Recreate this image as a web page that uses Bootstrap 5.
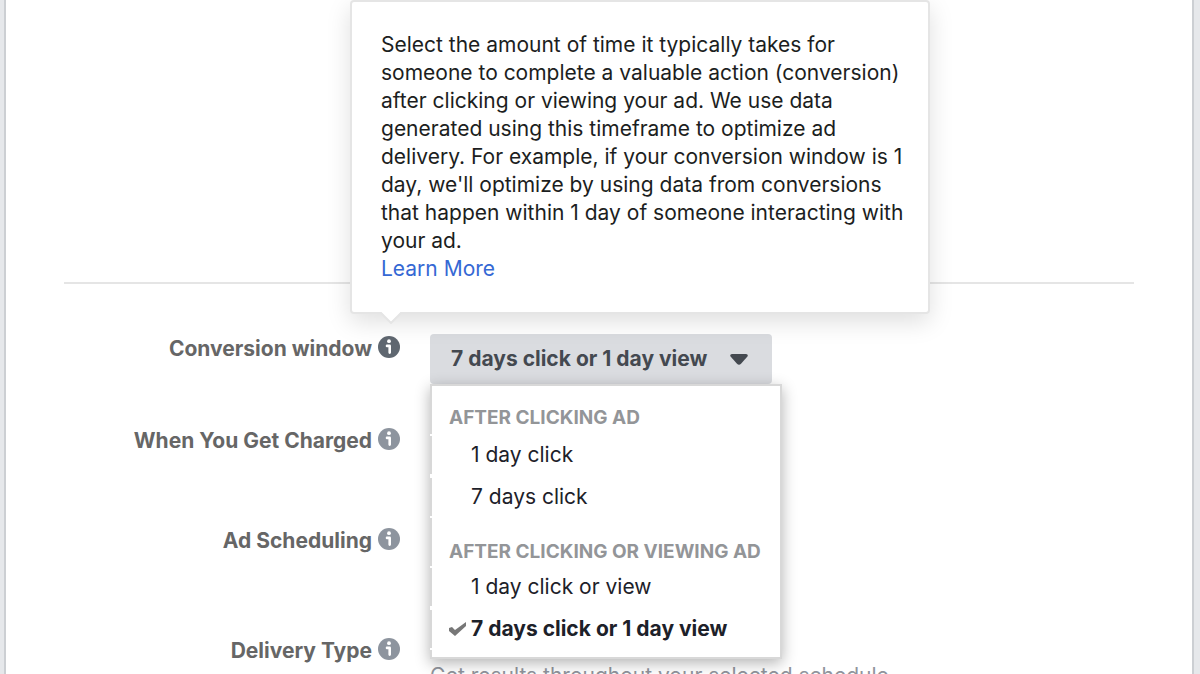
<!DOCTYPE html>
<html lang="en">
<head>
<meta charset="utf-8">
<meta name="viewport" content="width=device-width, initial-scale=1">
<title>Ad set: optimization and delivery</title>
<link href="https://cdn.jsdelivr.net/npm/bootstrap@5.3.0/dist/css/bootstrap.min.css" rel="stylesheet">
<style>
  body { font-family: Inter, "Liberation Sans", sans-serif; font-size: 21px; line-height: 28px; color: #1d2129; background: #e6e8eb; }
  .panel { margin: 0 6px 0 4px; padding: 0 58px; border: solid #cccfd3; border-width: 0 2px; }
  .budget-area { height: 282px; border-bottom: 2px solid #e5e5e5; box-sizing: content-box; }
  .field-label { flex: 0 0 336px; padding-top: 43px; gap: 6px; color: #666; font-weight: 700; }
  .row-window .field-label { padding-top: 51px; }
  .info-btn { width: 22px; height: 22px; margin-top: 1px; color: #8d949e; line-height: 0; }
  .info-btn.active { color: #5f6770; }
  .field-row { column-gap: 30px; }
  .row-charged { min-height: 100px; }
  .row-schedule { min-height: 110px; }
  .tip { left: -28px; bottom: 44px; width: 580px; padding: 29px 18px 29px 29px; border: 2px solid #e5e5e5; border-radius: 4px; color: #1d2129; font-weight: 400; box-shadow: 0 8px 24px rgba(0,0,0,.13); z-index: 20; }
  .tip p { font-size: 21px; color: #1c1e21; }
  .tip a { color: #3568d4; }
  .tip-arrow { left: 27px; top: 100%; width: 24px; height: 12px; }
  .window-btn { height: 50px; margin-top: 50px; padding: 0 24px 0 21px; border: 0; border-radius: 4px; background: #dadce0; color: #444950; font-size: 21px; font-weight: 700; width: 342px; }
  .window-menu { top: 100%; left: 0; width: 352px; padding: 16px 0 7px; border: 2px solid #d8d8d8; border-left: 0; background: #fff; box-shadow: 0 4px 14px rgba(0,0,0,.3); z-index: 10; }
  .menu-edge { left: 0; top: 0; bottom: 0; width: 2px; background: linear-gradient(#d8d8d8 48px, #fff 48px 50px, #d8d8d8 50px 88px, #fff 88px 92px, #d8d8d8 92px 130px, #fff 130px 132px, #d8d8d8 132px 180px, #fff 180px 182px, #d8d8d8 182px 220px, #fff 220px 224px, #d8d8d8 224px 262px, #fff 262px 264px, #d8d8d8 264px); }
  .group-title { padding-left: 19px; font-size: 19px; font-weight: 700; line-height: 32px; color: #939598; white-space: nowrap; }
  .group-next { padding-top: 20px; line-height: 28px; }
  .choice { height: 42px; padding: 0 0 0 19px; border: 0; background: none; color: #1d2129; text-align: left; width: 100%; }
  .choice-tick { width: 22px; flex: none; line-height: 0; }
  .choice.selected { font-weight: 700; }
  .help { font-size: 21px; color: #90949c; padding-top: 68px; }
</style>
</head>
<body class="vh-100 overflow-hidden">
<svg class="d-none" aria-hidden="true">
  <symbol id="info" viewBox="0 0 22 22">
    <circle cx="11" cy="11" r="11" fill="currentColor"/>
    <circle cx="11" cy="5.2" r="1.9" fill="#fff"/>
    <path d="M9 9.9H11.7V16.6" fill="none" stroke="#fff" stroke-width="2.6" stroke-linecap="round" stroke-linejoin="round"/>
  </symbol>
</svg>
<main class="panel bg-white min-vh-100">
  <div class="budget-area"></div>
  <div class="field-row row-window d-flex">
    <div class="field-label d-flex justify-content-end">
      <label for="window">Conversion window</label>
      <div class="position-relative align-self-start">
        <button class="info-btn active btn p-0 border-0 d-block" type="button" aria-describedby="windowTip" aria-label="About conversion window"><svg width="22" height="22"><use href="#info"/></svg></button>
        <div class="tip position-absolute bg-white" id="windowTip" role="tooltip">
          <p class="mb-0">Select the amount of time it typically takes for someone to complete a valuable action (conversion) after clicking or viewing your ad. We use data generated using this timeframe to optimize ad delivery. For example, if your conversion window is 1 day, we'll optimize by using data from conversions that happen within 1 day of someone interacting with your ad.</p>
          <a class="text-decoration-none d-block" href="#learn">Learn More</a>
          <svg class="tip-arrow position-absolute" viewBox="0 0 24 12"><path d="M1 -1L12 10L23 -1Z" fill="#fff"/><path d="M1 0L12 11L23 0" fill="none" stroke="#e5e5e5" stroke-width="2"/></svg>
        </div>
      </div>
    </div>
    <div class="position-relative align-self-start">
      <button class="window-btn d-flex align-items-center justify-content-between" id="window" type="button" aria-haspopup="listbox" aria-expanded="true"><span>7 days click or 1 day view</span>
        <svg width="18" height="11" viewBox="0 0 18 11"><path d="M2 0H16Q19 .7 17 3L11 9.8Q9 11.6 7 9.8L1 3Q-1 .7 2 0Z" fill="#444950"/></svg></button>
      <div class="window-menu position-absolute" role="listbox" aria-label="Conversion window">
        <div class="menu-edge position-absolute"></div>
        <div class="group-title">AFTER CLICKING AD</div>
        <button class="choice d-flex align-items-center" type="button" role="option"><span class="choice-tick"></span>1 day click</button>
        <button class="choice d-flex align-items-center" type="button" role="option"><span class="choice-tick"></span>7 days click</button>
        <div class="group-title group-next">AFTER CLICKING OR VIEWING AD</div>
        <button class="choice d-flex align-items-center" type="button" role="option"><span class="choice-tick"></span>1 day click or view</button>
        <button class="choice selected d-flex align-items-center" type="button" role="option" aria-selected="true"><span class="choice-tick"><svg width="18" height="16" viewBox="0 0 18 16"><path d="M0 7L3 6L6 9L17 1V5L6 15L0 10Z" fill="#777"/></svg></span>7 days click or 1 day view</button>
      </div>
    </div>
  </div>
  <div class="field-row row-charged d-flex">
    <div class="field-label d-flex justify-content-end">
      <span>When You Get Charged</span>
      <button class="info-btn btn p-0 border-0" type="button" aria-label="About when you get charged"><svg width="22" height="22"><use href="#info"/></svg></button>
    </div>
  </div>
  <div class="field-row row-schedule d-flex">
    <div class="field-label d-flex justify-content-end">
      <span>Ad Scheduling</span>
      <button class="info-btn btn p-0 border-0" type="button" aria-label="About ad scheduling"><svg width="22" height="22"><use href="#info"/></svg></button>
    </div>
  </div>
  <div class="field-row d-flex">
    <div class="field-label d-flex justify-content-end">
      <span>Delivery Type</span>
      <button class="info-btn btn p-0 border-0" type="button" aria-label="About delivery type"><svg width="22" height="22"><use href="#info"/></svg></button>
    </div>
    <div class="help">Get results throughout your selected schedule.</div>
  </div>
</main>
<script src="https://cdn.jsdelivr.net/npm/bootstrap@5.3.0/dist/js/bootstrap.bundle.min.js"></script>
</body>
</html>
